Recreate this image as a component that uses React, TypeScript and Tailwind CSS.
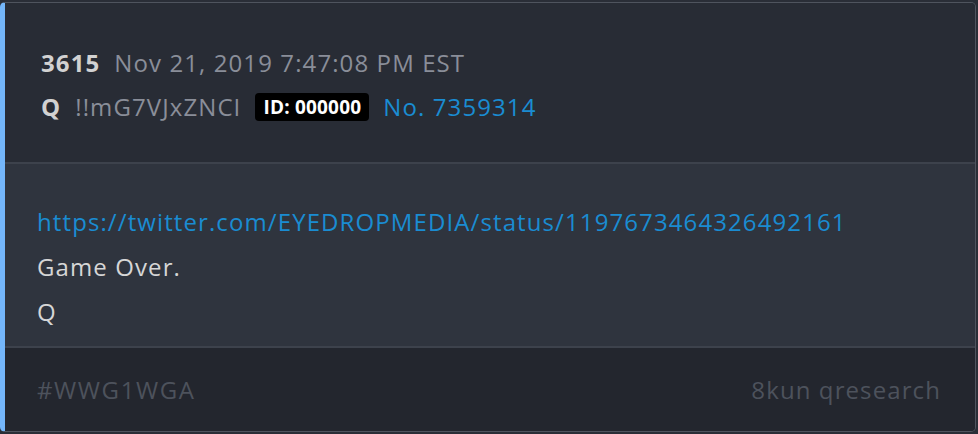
export default function App() {
  return (
    <div className="w-[978px] h-[434px] bg-[#2a2e37] pt-[2px]" style={{ fontFamily: '"Open Sans", sans-serif' }}>
      <div className="w-[976px] h-[430px] flex flex-col overflow-hidden rounded-[5px] border border-[#4f545e] border-l-[5px] border-l-[#74b6fa] tracking-[1.1px]">
        <div className="bg-[#282c35] pt-[38px] pb-[33px] pl-[36px] text-[24px] leading-[44px]">
          <div className="flex items-center gap-[14px]">
            <span className="font-bold text-[#d2d2d2]">3615</span>
            <span className="text-[#8a8e99]">Nov 21, 2019 7:47:08 PM EST</span>
          </div>
          <div className="flex items-center gap-[14px]">
            <span className="font-bold text-[#d2d2d2]">Q</span>
            <span className="text-[#8a8e99]">!!mG7VJxZNCI</span>
            <span className="bg-black text-white font-bold text-[19px] leading-[28px] px-[8px] rounded-[4px] tracking-[0.2px]">ID: 000000</span>
            <span className="text-[#1a8cd2]">No. 7359314</span>
          </div>
        </div>
        <div className="h-[2px] bg-[#3d424c]" />
        <div className="bg-[#2f343e] pt-[35px] pb-[12px] pl-[32px] text-[24px] leading-[45px] text-[#d6d6d6]">
          <div className="text-[#1a8cd2]">https://twitter.com/EYEDROPMEDIA/status/1197673464326492161</div>
          <div>Game Over.</div>
          <div>Q</div>
        </div>
        <div className="h-[2px] bg-[#3d424c]" />
        <div className="flex-1 bg-[#23262e] flex items-center justify-between pl-[32px] pr-[34px] text-[24px] text-[#4d525c] tracking-[1.6px]">
          <span>#WWG1WGA</span>
          <span className="tracking-[1.1px]">8kun qresearch</span>
        </div>
      </div>
    </div>
  );
}
